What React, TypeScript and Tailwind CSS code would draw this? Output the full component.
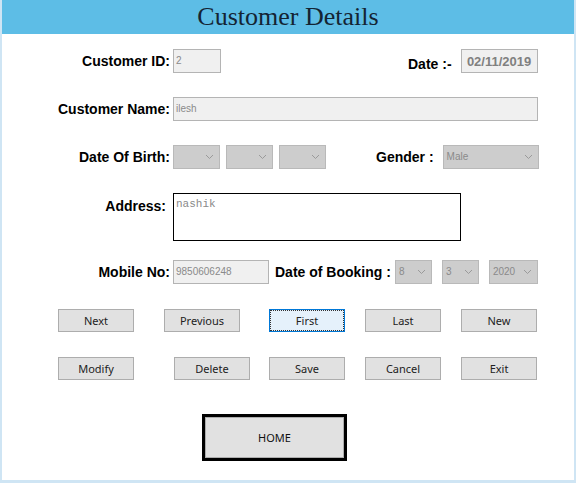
import React from 'react';

const label = "font-['Liberation_Sans',Arial,sans-serif] font-bold text-[14px] text-black leading-none";
const small = "font-['Liberation_Sans',Arial,sans-serif] text-[10px] text-[#8a8a8a] leading-none";

function Chevron() {
  return (
    <svg width="9" height="6" viewBox="0 0 9 6" className="shrink-0">
      <path d="M1 1 L4.5 4.5 L8 1" fill="none" stroke="#9a9a9a" strokeWidth="1" />
    </svg>
  );
}

function Select({ width, value }: { width: string; value?: string }) {
  return (
    <div
      className={`${width} h-[24px] bg-[#cdcdcd] border border-[#b9b9b9] flex items-center justify-between pl-[3px] pr-[5px]`}
    >
      <span className={small}>{value ?? ''}</span>
      <Chevron />
    </div>
  );
}

function Btn({ text, ml, focused }: { text: string; ml: string; focused?: boolean }) {
  return (
    <div
      className={`${ml} w-[76px] h-[23px] flex items-center justify-center border ${
        focused ? 'bg-[#e5f1fb] border-[#0078d7]' : 'bg-[#e1e1e1] border-[#adadad]'
      }`}
    >
      <div
        className={`w-full h-full flex items-center justify-center ${
          focused ? 'border border-dotted border-[#333]' : ''
        } font-['Noto_Sans',Arial,sans-serif] text-[11px] text-[#222] leading-none`}
      >
        {text}
      </div>
    </div>
  );
}

export default function App() {
  return (
    <div className="w-[576px] h-[483px] bg-white border-l-2 border-r-2 border-b-[3px] border-[#cfe5f4] flex flex-col overflow-hidden">
      <div className="h-[34px] bg-[#5dbde6] flex items-center justify-center">
        <h1 className="font-['Liberation_Serif','Times_New_Roman',serif] text-[26px] text-[#142433] leading-none">
          Customer Details
        </h1>
      </div>

      {/* Customer ID / Date */}
      <div className="mt-[15px] h-[24px] flex items-center">
        <div className={`w-[168px] text-right ${label}`}>Customer ID:</div>
        <div className="ml-[3px] w-[48px] h-[24px] bg-[#f0f0f0] border border-[#b4b4b4] flex items-center pl-[2px]">
          <span className={small}>2</span>
        </div>
        <div className={`ml-[187px] mt-[6px] ${label}`}>Date :-</div>
        <div className="ml-[9px] w-[77px] h-[24px] bg-[#f0f0f0] border border-[#b4b4b4] flex items-center justify-center">
          <span className="font-['Liberation_Sans',Arial,sans-serif] font-bold text-[13px] text-[#808080] leading-none">
            02/11/2019
          </span>
        </div>
      </div>

      {/* Customer Name */}
      <div className="mt-[24px] h-[24px] flex items-center">
        <div className={`w-[168px] text-right ${label}`}>Customer Name:</div>
        <div className="ml-[3px] w-[365px] h-[24px] bg-[#f0f0f0] border border-[#b4b4b4] flex items-center pl-[2px]">
          <span className={small}>ilesh</span>
        </div>
      </div>

      {/* DOB / Gender */}
      <div className="mt-[24px] h-[24px] flex items-center">
        <div className={`w-[168px] text-right ${label}`}>Date Of Birth:</div>
        <div className="ml-[3px] flex gap-[6px]">
          <Select width="w-[47px]" />
          <Select width="w-[47px]" />
          <Select width="w-[47px]" />
        </div>
        <div className={`ml-[50px] ${label}`}>Gender :</div>
        <div className="ml-[9px]">
          <Select width="w-[96px]" value="Male" />
        </div>
      </div>

      {/* Address */}
      <div className="mt-[24px] h-[48px] flex items-start">
        <div className={`w-[164px] text-right mt-[6px] ${label}`}>Address:</div>
        <div className="ml-[7px] w-[288px] h-[48px] border border-black bg-white pl-[2px] pt-[5px]">
          <span className="font-['Liberation_Mono','Courier_New',monospace] text-[11px] text-[#8a8a8a] leading-none block">
            nashik
          </span>
        </div>
      </div>

      {/* Mobile / Booking */}
      <div className="mt-[19px] h-[24px] flex items-center">
        <div className={`w-[168px] text-right ${label}`}>Mobile No:</div>
        <div className="ml-[3px] w-[96px] h-[24px] bg-[#f0f0f0] border border-[#b4b4b4] flex items-center pl-[2px]">
          <span className={small}>9850606248</span>
        </div>
        <div className={`ml-[6px] ${label}`}>Date of Booking :</div>
        <div className="ml-[4px] flex">
          <Select width="w-[37px]" value="8" />
          <div className="ml-[10px]">
            <Select width="w-[37px]" value="3" />
          </div>
          <div className="ml-[10px]">
            <Select width="w-[49px]" value="2020" />
          </div>
        </div>
      </div>

      {/* Buttons row 1 */}
      <div className="mt-[25px] flex">
        <Btn text="Next" ml="ml-[56px]" />
        <Btn text="Previous" ml="ml-[30px]" />
        <Btn text="First" ml="ml-[29px]" focused />
        <Btn text="Last" ml="ml-[20px]" />
        <Btn text="New" ml="ml-[20px]" />
      </div>

      {/* Buttons row 2 */}
      <div className="mt-[25px] flex">
        <Btn text="Modify" ml="ml-[56px]" />
        <Btn text="Delete" ml="ml-[40px]" />
        <Btn text="Save" ml="ml-[19px]" />
        <Btn text="Cancel" ml="ml-[20px]" />
        <Btn text="Exit" ml="ml-[20px]" />
      </div>

      {/* Home */}
      <div className="mt-[34px] flex">
        <div className="ml-[200px] w-[145px] h-[47px] border-[3px] border-black bg-[#e1e1e1] flex items-center justify-center">
          <div className="w-full h-full border border-[#adadad] flex items-center justify-center font-['Noto_Sans',Arial,sans-serif] text-[11px] text-[#111] leading-none">
            HOME
          </div>
        </div>
      </div>
    </div>
  );
}
